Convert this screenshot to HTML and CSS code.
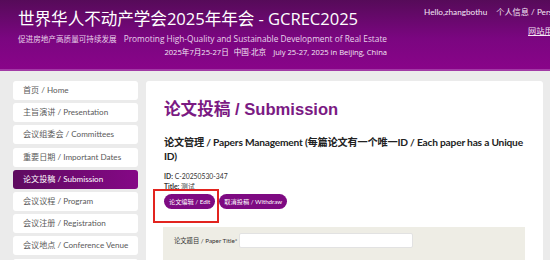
FILE: index.html
```html
<!DOCTYPE html>
<html lang="zh">
<head>
<meta charset="utf-8">
<title>GCREC2025 - 论文投稿 / Submission</title>
<link rel="stylesheet" href="styles.css">
</head>
<body>
<header class="top">
  <div class="brand">
    <h1 class="site-title">世界华人不动产学会2025年年会 - GCREC2025</h1>
    <div class="tagline">
      <p class="slogan">促进房地产高质量可持续发展<span class="sep"></span><span class="slogan-en">Promoting High-Quality and Sustainable Development of Real Estate</span></p>
      <p class="dates">2025年7月25-27日<span class="sep-s"></span>中国·北京<span class="sep"></span>July 25-27, 2025 in Beijing, China</p>
    </div>
  </div>
  <div class="user">
    <p class="user-line">Hello,zhangbothu<span class="sep-u"></span>个人信息 / Personal Information</p>
    <p class="user-link"><a href="#">网站用户中心</a></p>
  </div>
</header>
<div class="page">
  <nav class="side">
    <a class="nav-item" href="#">首页 / Home</a>
    <a class="nav-item" href="#">主旨演讲 / Presentation</a>
    <a class="nav-item" href="#">会议组委会 / Committees</a>
    <a class="nav-item" href="#">重要日期 / Important Dates</a>
    <a class="nav-item active" href="#">论文投稿 / Submission</a>
    <a class="nav-item" href="#">会议议程 / Program</a>
    <a class="nav-item" href="#">会议注册 / Registration</a>
    <a class="nav-item" href="#">会议地点 / Conference Venue</a>
    <a class="nav-item" href="#">联系我们 / Contact</a>
  </nav>
  <main class="card">
    <h2 class="page-title">论文投稿 / Submission</h2>
    <h3 class="section-title">论文管理 / Papers Management (每篇论文有一个唯一ID / Each paper has a Unique ID)</h3>
    <p class="meta"><b>ID:</b> C-20250530-347</p>
    <p class="meta"><b>Title:</b> 测试</p>
    <div class="actions">
      <span class="highlight"></span>
      <a class="btn" href="#">论文编辑 / Edit</a>
      <a class="btn" href="#">取消投稿 / Withdraw</a>
    </div>
    <form class="form-box">
      <div class="field">
        <label class="field-label" for="ptitle">论文题目 / Paper Title*</label>
        <input class="field-input" id="ptitle" type="text">
      </div>
    </form>
  </main>
</div>
</body>
</html>
```
FILE: styles.css
```css
* { box-sizing: border-box; }
html, body { margin: 0; padding: 0; }
body {
  background: #ebebeb;
  font-family: Lato, "Noto Sans CJK SC", sans-serif;
  color: #333;
  width: 550px;
  height: 260px;
  overflow: hidden;
}
p { margin: 0; }

.top {
  display: flex;
  height: 71px;
  background: linear-gradient(180deg, #560b59 0%, #7a0680 55%, #890489 100%);
  border-bottom: 2px solid #a23aa6;
  color: #fff;
  white-space: nowrap;
}
.brand {
  flex: none;
  padding: 8px 0 0 18px;
}
.site-title {
  margin: 0;
  font-family: "Open Sans", "Noto Sans CJK SC", sans-serif;
  font-weight: 400;
  font-size: 16.6px;
  line-height: 21px;
  letter-spacing: -0.05px;
}
.tagline {
  display: flex;
  flex-direction: column;
  align-items: flex-end;
  margin-top: 4px;
  font-family: "Open Sans", "Noto Sans CJK SC", sans-serif;
  font-size: 7.6px;
  color: #e8d4ea;
}
.slogan { line-height: 12px; }
.slogan-en { font-size: 8.3px; }
.dates { line-height: 14px; color: #f3e8f4; }
.sep { display: inline-block; width: 7px; }
.sep-s { display: inline-block; width: 5px; }
.sep-u { display: inline-block; width: 9px; }

.user {
  flex: none;
  margin-left: 37px;
  padding-top: 7px;
  font-size: 8.2px;
  color: #f4e8f5;
}
.user-line { line-height: 11px; }
.user-link { margin-top: 8px; padding-left: 104px; line-height: 11px; }
.user-link a { color: #f4e8f5; }

.page {
  display: flex;
  gap: 8px;
  padding: 10px 7px 0 13px;
}
.side {
  flex: none;
  width: 125px;
  display: flex;
  flex-direction: column;
  gap: 3.2px;
}
.nav-item {
  display: block;
  height: 19px;
  line-height: 19px;
  padding-left: 10px;
  background: #fff;
  border-radius: 3px;
  color: #5a5a5a;
  font-size: 8.1px;
  text-decoration: none;
  white-space: nowrap;
}
.nav-item.active {
  background: linear-gradient(90deg, #5e0b60, #850886);
  color: #fff;
}

.card {
  flex: 1;
  background: #fff;
  border-radius: 3px 3px 0 0;
  padding: 19px 18px 0 18px;
  height: 200px;
}
.page-title {
  margin: 0;
  font-family: "Liberation Sans", "Noto Sans CJK SC", sans-serif;
  font-weight: 700;
  font-size: 16.6px;
  line-height: 20px;
  color: #7b1a83;
}
.section-title {
  margin: 15px 0 0;
  font-size: 10.2px;
  letter-spacing: -0.2px;
  line-height: 14px;
  font-weight: 700;
  color: #222;
  max-width: 362px;
}
.meta {
  margin-top: 0;
  font-size: 6.8px;
  line-height: 10px;
  color: #333;
}
.meta:first-of-type { margin-top: 8px; }
.meta b { font-weight: 700; }

.actions {
  position: relative;
  display: flex;
  gap: 4px;
  margin-top: 3px;
}
.btn {
  display: block;
  height: 15px;
  line-height: 15px;
  padding: 0 5px;
  border-radius: 8px;
  background: #7e0a82;
  color: #fff;
  font-size: 6.2px;
  text-decoration: none;
  white-space: nowrap;
}
.highlight {
  position: absolute;
  left: -11px;
  top: -5px;
  width: 66px;
  height: 34px;
  border: 2px solid #e2241f;
}

.form-box {
  margin: 18px 0 0 -1px;
  width: 362px;
  height: 60px;
  background: #eeede5;
  padding: 6px 0 0 11px;
}
.field {
  display: flex;
  align-items: center;
  gap: 2px;
}
.field-label {
  flex: none;
  width: 63px;
  font-size: 6.3px;
  color: #333;
  white-space: nowrap;
}
.field-input {
  width: 174px;
  height: 15px;
  border: 1px solid #e2e2e2;
  border-radius: 2px;
  background: #fff;
  padding: 0;
}
```
